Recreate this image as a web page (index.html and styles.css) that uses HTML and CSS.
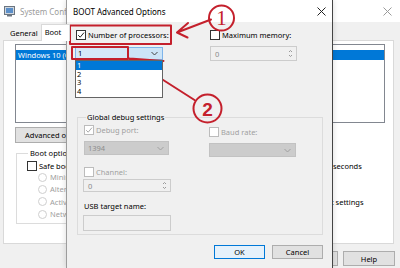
FILE: index.html
```html
<!DOCTYPE html>
<html>
<head>
<meta charset="utf-8">
<link rel="stylesheet" href="styles.css">
</head>
<body>
<div class="bgwin">
  <div class="bg-title">
    <svg class="app-icon" width="11" height="11" viewBox="0 0 11 11"><rect x="0.5" y="0.5" width="10" height="8" fill="#cfd6de" stroke="#6b7580"/><rect x="2" y="2" width="7" height="5" fill="#5b8fc9"/><rect x="3" y="9" width="5" height="1.5" fill="#6b7580"/></svg>
    <span class="bg-title-text">System Configuration</span>
    <svg class="bg-close" width="9" height="9" viewBox="0 0 9 9"><path d="M0.5 0.5 L8.5 8.5 M8.5 0.5 L0.5 8.5" stroke="#9a9a9a" stroke-width="1"/></svg>
  </div>
  <div class="tabs">
    <div class="tab">General</div>
    <div class="tab active">Boot</div>
  </div>
  <div class="panel">
    <div class="oslist">
      <div class="osrow">Windows 10 (C:\WINDOWS) : Current OS; Default OS</div>
    </div>
    <div class="btn adv-btn">Advanced options...</div>
    <div class="lower">
      <fieldset class="bootopts">
        <legend>Boot options</legend>
        <div class="chk-row safe"><span class="cb"></span><span>Safe boot</span></div>
        <div class="radio-row"><span class="rb"></span><span>Minimal</span></div>
        <div class="radio-row"><span class="rb"></span><span>Alternate shell</span></div>
        <div class="radio-row"><span class="rb"></span><span>Active Directory repair</span></div>
        <div class="radio-row"><span class="rb"></span><span>Network</span></div>
      </fieldset>
      <div class="rightcol">
        <div class="timeout"><span class="to-label">Timeout:</span><span class="to-box">30</span><span>seconds</span></div>
        <div class="permanent"><span class="cb"></span><span class="perm-text">Make all boot settings permanent</span></div>
      </div>
    </div>
  </div>
  <div class="bg-buttons">
    <div class="btn bgbtn">Apply</div>
    <div class="btn bgbtn">Help</div>
  </div>
</div>

<div class="dialog">
  <div class="dlg-title">
    <span>BOOT Advanced Options</span>
    <svg class="dlg-close" width="9" height="9" viewBox="0 0 9 9"><path d="M0.5 0.5 L8.5 8.5 M8.5 0.5 L0.5 8.5" stroke="#222" stroke-width="1"/></svg>
  </div>
  <div class="dlg-body">
    <div class="top-grid">
      <div class="col">
        <div class="chk-row"><span class="cb on"><svg width="8" height="8" viewBox="0 0 8 8"><path d="M1.2 4.2 L3.2 6.2 L7 1.6" fill="none" stroke="#222" stroke-width="1"/></svg></span><span>Number of processors:</span></div>
        <div class="combo open">
          <span class="combo-edit">1</span>
          <span class="combo-btn"><svg width="7" height="5" viewBox="0 0 7 5"><path d="M0.5 1 L3.5 4 L6.5 1" fill="none" stroke="#444" stroke-width="1"/></svg></span>
          <div class="droplist">
            <div class="dl-item sel">1</div>
            <div class="dl-item">2</div>
            <div class="dl-item">3</div>
            <div class="dl-item">4</div>
          </div>
        </div>
      </div>
      <div class="col">
        <div class="chk-row"><span class="cb"></span><span>Maximum memory:</span></div>
        <div class="spin mem"><span>0</span><span class="spin-arrows"><svg width="5" height="9" viewBox="0 0 5 9"><path d="M1 3 L2.5 1.5 L4 3 M1 6 L2.5 7.5 L4 6" fill="none" stroke="#9a9a9a" stroke-width="1"/></svg></span></div>
      </div>
    </div>

    <fieldset class="debug">
      <legend>Global debug settings</legend>
      <div class="debug-grid">
        <div class="col">
          <div class="chk-row dis"><span class="cb dis"><svg width="8" height="8" viewBox="0 0 8 8"><path d="M1.2 4.2 L3.2 6.2 L7 1.6" fill="none" stroke="#a8a8a8" stroke-width="1"/></svg></span><span>Debug port:</span></div>
          <div class="dcombo port"><span>1394</span><svg width="7" height="5" viewBox="0 0 7 5"><path d="M0.5 1 L3.5 4 L6.5 1" fill="none" stroke="#a0a0a0" stroke-width="1"/></svg></div>
          <div class="chk-row dis channel"><span class="cb dis"></span><span>Channel:</span></div>
          <div class="spin chan"><span>0</span><span class="spin-arrows"><svg width="5" height="9" viewBox="0 0 5 9"><path d="M1 3 L2.5 1.5 L4 3 M1 6 L2.5 7.5 L4 6" fill="none" stroke="#9a9a9a" stroke-width="1"/></svg></span></div>
          <div class="usb-label">USB target name:</div>
          <div class="textbox"></div>
        </div>
        <div class="col">
          <div class="chk-row dis baud"><span class="cb dis"></span><span>Baud rate:</span></div>
          <div class="dcombo baudc"><span></span><svg width="7" height="5" viewBox="0 0 7 5"><path d="M0.5 1 L3.5 4 L6.5 1" fill="none" stroke="#a0a0a0" stroke-width="1"/></svg></div>
        </div>
      </div>
    </fieldset>

    <div class="dlg-buttons">
      <div class="btn dbtn default">OK</div>
      <div class="btn dbtn">Cancel</div>
    </div>
  </div>
</div>

<svg class="annot" width="400" height="268" viewBox="0 0 400 268">
  <g fill="none" stroke="#c4202c" stroke-width="2" stroke-linecap="round" stroke-linejoin="round">
    <rect x="70" y="25.5" width="101" height="18.5"/>
    <rect x="72" y="47" width="56" height="12"/>
    <path d="M211 19.5 L177 32.5 M177 32.5 L188 23 M177 32.5 L187.5 37.5"/>
    <circle cx="221.5" cy="18" r="12.5"/>
    <path d="M194.5 100 L129.5 58.5 M129.5 58.5 L140.5 90 M129.5 58.5 L163.5 61"/>
    <circle cx="207.5" cy="108.5" r="14"/>
  </g>
  <text x="221.5" y="25" class="num1">1</text>
  <text x="207.5" y="115.5" class="num2">2</text>
</svg>
</body>
</html>
```

FILE: styles.css
```css
html, body {
  margin: 0;
  padding: 0;
}
body {
  width: 400px;
  height: 268px;
  overflow: hidden;
  position: relative;
  background: #f0f0f0;
  font-family: "Noto Sans", "DejaVu Sans", sans-serif;
  font-size: 7.5px;
  color: #000;
}

/* ---------- background window ---------- */
.bgwin {
  position: absolute;
  left: 0;
  top: 0;
  width: 400px;
  height: 268px;
  background: #f0f0f0;
  display: flex;
  flex-direction: column;
}
.bg-title {
  height: 22px;
  flex: none;
  background: #ffffff;
  display: flex;
  align-items: center;
  padding: 0 8px 0 4px;
}
.app-icon { flex: none; }
.bg-title-text {
  margin-left: 5px;
  color: #9b9b9b;
  font-size: 8px;
}
.bg-close { margin-left: auto; }

.tabs {
  height: 18px;
  flex: none;
  display: flex;
  align-items: flex-end;
  padding-left: 7px;
}
.tab {
  height: 14px;
  line-height: 13px;
  padding: 0 3px;
  color: #000;
  margin-bottom: -1px;
}
.tab.active {
  height: 16px;
  line-height: 14px;
  background: #fff;
  border: 1px solid #d9d9d9;
  border-bottom: none;
  padding: 0 8px 0 3px;
  position: relative;
  z-index: 1;
}
.panel {
  flex: none;
  height: 199px;
  margin: 0 6px 0 3px;
  background: #fff;
  border: 1px solid #d9d9d9;
  padding: 3px 0 0 11px;
}
.oslist {
  width: 368px;
  border: 1px solid #828790;
  padding-top: 5px;
  height: 72px;
}
.osrow {
  height: 10px;
  line-height: 10px;
  background: #0078d7;
  color: #fff;
  padding-left: 2px;
  white-space: nowrap;
  overflow: hidden;
}
.btn {
  box-sizing: border-box;
  background: #e1e1e1;
  border: 1px solid #adadad;
  display: flex;
  align-items: center;
  justify-content: center;
  white-space: nowrap;
}
.adv-btn {
  margin-top: 4px;
  width: 70px;
  height: 16px;
  justify-content: flex-start;
  padding-left: 9px;
}
.lower {
  display: flex;
}
.bootopts {
  margin: 5px 0 0 1px;
  padding: 0 0 0 10px;
  width: 220px;
  height: 76px;
  border: 1px solid #dcdcdc;
  box-sizing: border-box;
}
.bootopts legend {
  padding: 0 2px;
  margin-left: 1px;
  line-height: 10px;
  font-size: 7.5px;
}
.chk-row {
  display: flex;
  align-items: center;
  height: 10px;
  white-space: nowrap;
}
.cb {
  width: 10px;
  height: 10px;
  box-sizing: border-box;
  border: 1px solid #333;
  background: #fff;
  margin-right: 2px;
  flex: none;
  display: flex;
  align-items: center;
  justify-content: center;
}
.cb.dis { border-color: #bcbcbc; }
.safe { margin-top: 3px; }
.radio-row {
  display: flex;
  align-items: center;
  height: 12.3px;
  margin-left: 11px;
  color: #a0a0a0;
  white-space: nowrap;
}
.radio-row:first-of-type { margin-top: 5px; }
.rb {
  width: 9px;
  height: 9px;
  box-sizing: border-box;
  border: 1px solid #cfcfcf;
  border-radius: 50%;
  margin-right: 3px;
  flex: none;
}
.rightcol {
  margin-left: 15px;
  padding-top: 17px;
}
.timeout {
  display: flex;
  align-items: center;
  height: 12px;
  white-space: nowrap;
}
.to-label { width: 40px; }
.to-box {
  width: 38px;
  height: 12px;
  box-sizing: border-box;
  border: 1px solid #7a7a7a;
  margin-right: 4px;
  padding-left: 2px;
  line-height: 10px;
}
.permanent {
  margin-top: 25px;
  margin-left: 23px;
  display: flex;
  align-items: flex-start;
  line-height: 10px;
}
.perm-text {
  width: 84px;
}
.bg-buttons {
  margin-top: 7px;
  display: flex;
  justify-content: flex-end;
  gap: 5px;
  padding-right: 5px;
}
.bgbtn {
  width: 52px;
  height: 15px;
}

/* ---------- dialog ---------- */
.dialog {
  position: absolute;
  left: 66px;
  top: 0;
  width: 267px;
  height: 268px;
  box-sizing: border-box;
  border-left: 1px solid #9c9c9c;
  border-right: 1px solid #444;
  background: #f0f0f0;
  display: flex;
  flex-direction: column;
  box-shadow: 0 0 6px rgba(0,0,0,0.15);
}
.dlg-title {
  height: 22px;
  flex: none;
  background: #fff;
  display: flex;
  align-items: center;
  padding: 0 6px 0 6px;
  font-size: 8px;
}
.dlg-close { margin-left: auto; }
.dlg-body {
  padding: 8px 9px 0 9px;
}
.top-grid {
  display: grid;
  grid-template-columns: 134px 1fr;
  height: 31px;
}
.combo {
  position: relative;
  margin: 7px 0 0 -1px;
  width: 88px;
  height: 13px;
  display: flex;
}
.combo-edit {
  width: 53px;
  box-sizing: border-box;
  background: #d5e8f8;
  border: 1px solid #7eb4ea;
  padding-left: 2px;
  line-height: 11px;
}
.combo-btn {
  flex: 1;
  background: #cce4f7;
  border: 1px solid #7eb4ea;
  border-left: none;
  display: flex;
  align-items: center;
  justify-content: flex-end;
  padding-right: 4px;
}
.droplist {
  position: absolute;
  left: 0;
  top: 13px;
  width: 88px;
  box-sizing: border-box;
  background: #fff;
  border: 1px solid #646464;
  z-index: 2;
  padding-bottom: 1px;
}
.dl-item {
  height: 8.7px;
  line-height: 8.7px;
  padding-left: 1px;
}
.dl-item.sel {
  background: #0078d7;
  color: #fff;
}
.spin {
  display: flex;
  align-items: center;
  justify-content: space-between;
  box-sizing: border-box;
  border: 1px solid #cccccc;
  background: #f0f0f0;
  color: #8a8a8a;
  padding: 0 3px 0 4px;
}
.spin.mem {
  margin-top: 6px;
  width: 87px;
  height: 15px;
}
.spin-arrows { display: flex; }

.debug {
  margin: 51px 0 0 1px;
  padding: 3px 0 3px 6px;
  width: 246px;
  box-sizing: border-box;
  border: 1px solid #dcdcdc;
}
.debug legend {
  padding: 0 1px;
  margin-left: 2px;
  line-height: 10px;
  font-size: 7.5px;
}
.debug-grid {
  display: grid;
  grid-template-columns: 125px 1fr;
}
.chk-row.dis { color: #a0a0a0; }
.dcombo {
  margin-top: 6px;
  height: 14px;
  box-sizing: border-box;
  background: #cccccc;
  border: 1px solid #c2c2c2;
  display: flex;
  align-items: center;
  justify-content: space-between;
  padding: 0 4px 0 3px;
  color: #8c8c8c;
}
.dcombo.port { width: 85px; }
.dcombo.baudc { width: 87px; }
.baud { margin-top: 2px; }
.channel { margin-top: 12px; }
.spin.chan {
  margin: 2px 0 0 -1px;
  width: 88px;
  height: 13px;
}
.usb-label {
  margin-top: 9px;
  height: 10px;
  line-height: 10px;
  white-space: nowrap;
}
.textbox {
  margin: 4px 0 0 -1px;
  width: 88px;
  height: 16px;
  box-sizing: border-box;
  border: 1px solid #cccccc;
  background: #f0f0f0;
}
.dlg-buttons {
  margin-top: 10px;
  display: flex;
  justify-content: flex-end;
  gap: 7px;
}
.dbtn {
  width: 51px;
  height: 14px;
}
.dbtn.default {
  border: 1px solid #0078d7;
  background: #e5f1fb;
}

/* ---------- annotations ---------- */
.annot {
  position: absolute;
  left: 0;
  top: 0;
  pointer-events: none;
}
.num1 {
  font-family: "Liberation Serif", serif;
  font-size: 21px;
  fill: #c4202c;
  text-anchor: middle;
}
.num2 {
  font-family: "Liberation Sans", sans-serif;
  font-weight: bold;
  font-size: 19px;
  fill: #c4202c;
  text-anchor: middle;
}
```
